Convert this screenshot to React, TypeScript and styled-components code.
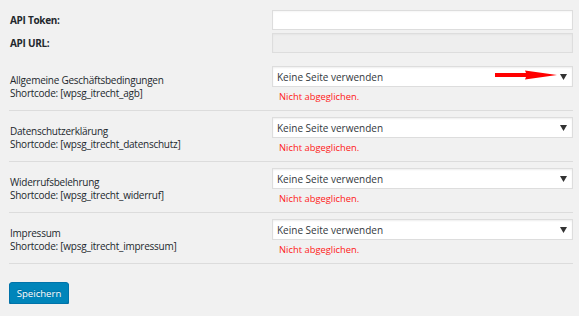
import React from 'react';
import styled, { createGlobalStyle } from 'styled-components';

const GlobalStyle = createGlobalStyle`
  body {
    margin: 0;
    background: #f1f1f1;
    font-family: "Open Sans", "Noto Sans", sans-serif;
    color: #444;
  }
`;

const Page = styled.div`
  padding: 10px 6px 0 9px;
`;

const ApiGrid = styled.div`
  display: grid;
  grid-template-columns: 263px 1fr;
  row-gap: 3px;
  margin-bottom: 7px;
`;

const ApiLabel = styled.label`
  font-size: 10px;
  letter-spacing: -0.3px;
  font-weight: 700;
  color: #23282d;
  display: flex;
  align-items: center;
  padding-left: 1px;
`;

const TextInput = styled.input<{ $disabled?: boolean }>`
  box-sizing: border-box;
  height: 20px;
  width: 100%;
  margin: 0;
  border: 1px solid #ddd;
  background: ${(p) => (p.$disabled ? '#eeeeee' : '#fff')};
  box-shadow: inset 0 1px 2px rgba(0, 0, 0, 0.04);
  outline: none;
`;

const SettingRow = styled.div`
  display: grid;
  grid-template-columns: 263px 1fr;
  border-bottom: 1px solid #dcdcdc;
  height: 50px;
`;

const LabelCell = styled.div`
  padding: 14px 0 0 1px;
  font-size: 10px;
  letter-spacing: -0.25px;
  line-height: 13px;
  color: #23282d;
`;

const FieldCell = styled.div`
  padding-top: 6px;
`;

const SelectBox = styled.div`
  position: relative;
  box-sizing: border-box;
  height: 21px;
  border: 1px solid #ddd;
  background: #fff;
  box-shadow: inset 0 1px 2px rgba(0, 0, 0, 0.07);
  font-size: 10px;
  color: #32373c;
  display: flex;
  align-items: center;
  padding: 0 5px 0 4px;
`;

const Caret = styled.svg`
  margin-left: auto;
  flex: none;
`;

const Pointer = styled.svg`
  position: absolute;
  left: 222px;
  top: 3px;
`;

const Status = styled.div`
  color: #ff2020;
  font-size: 9.4px;
  line-height: 14px;
  margin-top: 3px;
  padding-left: 7px;
`;

const SaveButton = styled.button`
  margin-top: 18px;
  height: 22px;
  width: 60px;
  padding: 0;
  border: 1px solid #0073aa;
  border-radius: 3px;
  background: #0085ba;
  box-shadow: 0 1px 0 #006799;
  color: #fff;
  font-family: "Open Sans", "Noto Sans", sans-serif;
  font-size: 9.6px;
  text-shadow: 0 -1px 1px #006799;
`;

const settings = [
  { title: 'Allgemeine Geschäftsbedingungen', code: 'wpsg_itrecht_agb', marked: true },
  { title: 'Datenschutzerklärung', code: 'wpsg_itrecht_datenschutz' },
  { title: 'Widerrufsbelehrung', code: 'wpsg_itrecht_widerruf' },
  { title: 'Impressum', code: 'wpsg_itrecht_impressum' },
];

const App: React.FC = () => {
  return (
    <Page>
      <GlobalStyle />
      <ApiGrid>
        <ApiLabel>API Token:</ApiLabel>
        <TextInput />
        <ApiLabel>API URL:</ApiLabel>
        <TextInput $disabled disabled />
      </ApiGrid>

      {settings.map((s) => (
        <SettingRow key={s.code}>
          <LabelCell>
            {s.title}
            <br />
            Shortcode: [{s.code}]
          </LabelCell>
          <FieldCell>
            <SelectBox>
              Keine Seite verwenden
              {s.marked && (
                <Pointer width="62" height="10" viewBox="0 0 62 10">
                  <path d="M0 3 H31 L30 0.5 L62 5 L30 9.5 L31 7 H0 Z" fill="#f00" />
                </Pointer>
              )}
              <Caret width="7" height="6" viewBox="0 0 7 6">
                <path d="M0 0 H7 L3.5 6 Z" fill="#333" />
              </Caret>
            </SelectBox>
            <Status>Nicht abgeglichen.</Status>
          </FieldCell>
        </SettingRow>
      ))}

      <SaveButton>Speichern</SaveButton>
    </Page>
  );
};

export default App;
